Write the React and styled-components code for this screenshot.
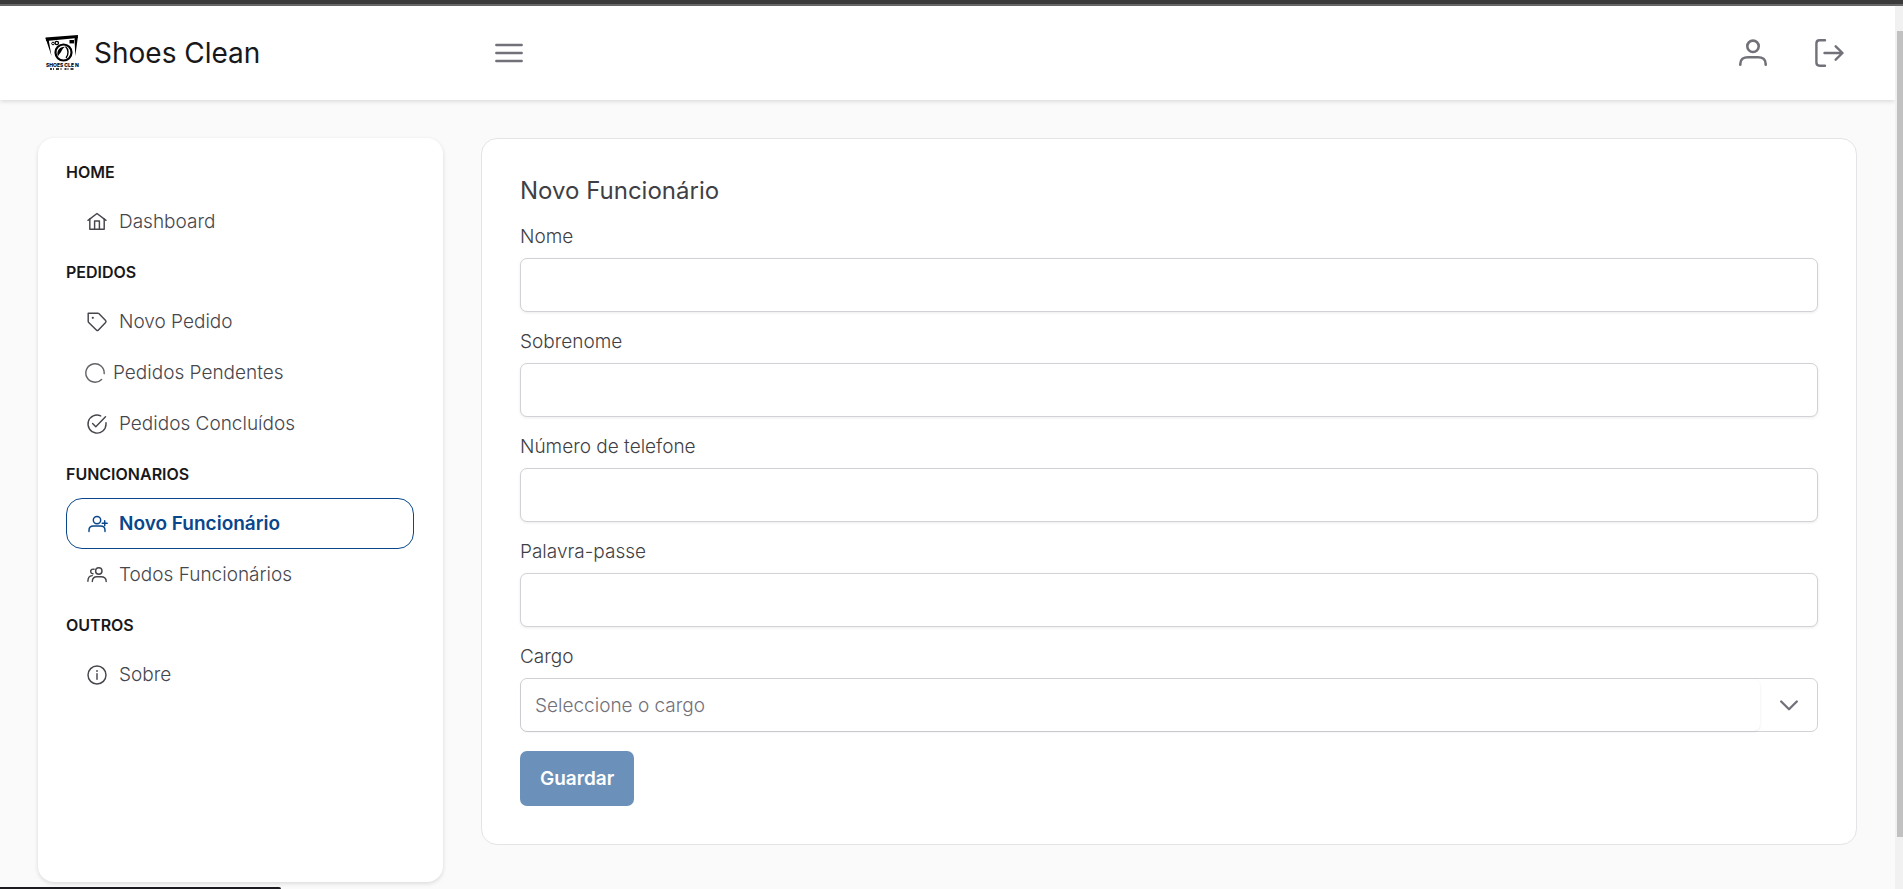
import React, { useRef } from "react";
import styled, { createGlobalStyle, css } from "styled-components";

const GlobalStyle = createGlobalStyle`
  *, *::before, *::after { box-sizing: border-box; }
  body {
    margin: 0;
    background: #fafafa;
    color: #3f3f46;
    font-family: Inter, "Liberation Sans", sans-serif;
    font-size: 19px;
    font-weight: 300;
  }
  button, input, select { font: inherit; color: inherit; }
`;

const Window = styled.div`
  display: flex;
  flex-direction: column;
  min-height: 100vh;
`;

const WindowEdge = styled.div`
  height: 6px;
  background: #3a3a3a;
  border-bottom: 2px solid #696969;
`;

const Viewport = styled.div`
  flex: 1;
  display: grid;
  grid-template-columns: minmax(0, 1fr) 8px;
`;

const Page = styled.div`
  display: flex;
  flex-direction: column;
`;

const ScrollTrack = styled.div`
  display: flex;
  flex-direction: column;
  background: #f1f1f1;
  padding: 25px 0 52px 2px;
`;

const ScrollThumb = styled.div`
  flex: 1;
  background: #c1c1c1;
`;

const TopBar = styled.header`
  display: flex;
  align-items: center;
  height: 94px;
  padding: 0 38px 0 45px;
  background: #fff;
  box-shadow: 0 2px 5px rgba(0, 0, 0, 0.08), 0 1px 4px rgba(0, 0, 0, 0.06);
`;

const Brand = styled.a`
  display: flex;
  align-items: center;
  gap: 15px;
  flex: 0 0 432px;
  color: #18181b;
  font-size: 28px;
  font-weight: 400;
  text-decoration: none;
`;

const IconButton = styled.button`
  display: flex;
  align-items: center;
  justify-content: center;
  width: ${(p) => (p.$wide ? 64 : 56)}px;
  height: 56px;
  padding: 0;
  border: 0;
  background: none;
  color: #71717a;
`;

const TopActions = styled.div`
  display: flex;
  gap: 20px;
  margin-left: auto;
`;

const Body = styled.div`
  flex: 1;
  display: grid;
  grid-template-columns: 405px minmax(0, 1fr);
  gap: 38px;
  padding: 38px 38px 7px;
`;

const Sidebar = styled.nav`
  padding: 9px 29px 9px 28px;
  border-radius: 16px;
  background: #fff;
  box-shadow: 0 2px 5px rgba(0, 0, 0, 0.08), 0 1px 4px rgba(0, 0, 0, 0.06);
`;

const GroupTitle = styled.h2`
  margin: 0;
  padding: 15px 0 14px;
  color: #18181b;
  font-size: 16px;
  font-weight: 600;
  line-height: 20px;
`;

const Menu = styled.ul`
  margin: 0;
  padding: 0;
  list-style: none;
`;

const MenuLink = styled.a`
  display: flex;
  align-items: center;
  gap: ${(p) => (p.$tight ? 8 : 12)}px;
  height: 51px;
  padding-left: ${(p) => (p.$tight ? 18 : 20)}px;
  border: 1px solid transparent;
  border-radius: 16px;
  color: #46464d;
  text-decoration: none;
  ${(p) =>
    p.$active &&
    css`
      border-color: #09468b;
      color: #09468b;
      font-weight: 600;
    `}
`;

const Card = styled.main`
  align-self: start;
  padding: 38px;
  border: 1px solid #e4e4e7;
  border-radius: 16px;
  background: #fff;
`;

const CardTitle = styled.h1`
  margin: 0 0 18px;
  font-size: 24px;
  font-weight: 400;
  line-height: 28px;
`;

const Form = styled.form`
  display: flex;
  flex-direction: column;
  align-items: stretch;
  gap: 16px;
`;

const Field = styled.div`
  display: flex;
  flex-direction: column;
  gap: 7px;
`;

const Label = styled.label`
  line-height: 28px;
`;

const TextInput = styled.input`
  width: 100%;
  height: 54px;
  padding: 0 14px;
  border: 1px solid #d1d1d6;
  border-radius: 7px;
  background: #fff;
  box-shadow: 0 1px 3px rgba(18, 18, 23, 0.08);
`;

const SelectFrame = styled.div`
  display: flex;
  height: 54px;
  border: 1px solid #d1d1d6;
  border-radius: 7px;
  background: #fff;
`;

const Select = styled.select`
  flex: 1;
  min-width: 0;
  padding: 0 14px;
  border: 0;
  border-radius: 7px;
  background: #fff;
  box-shadow: 0 1px 3px rgba(18, 18, 23, 0.08);
  color: #71717a;
  appearance: none;
`;

const SelectToggle = styled.button`
  display: flex;
  align-items: center;
  justify-content: center;
  width: 57px;
  padding: 0;
  border: 0;
  background: none;
  color: #71717a;
`;

const SaveButton = styled.button`
  align-self: flex-start;
  height: 55px;
  margin-top: 3px;
  padding: 0 20px;
  border: 0;
  border-radius: 7px;
  background: #6b90b9;
  color: #fff;
  font-weight: 600;
`;

const StatusBubble = styled.div`
  position: fixed;
  left: 0;
  bottom: 0;
  width: 281px;
  height: 2px;
  border-top-right-radius: 4px;
  background: #1c1b1f;
`;

const shapes = {
  home: (
    <>
      <path d="M1 8.3 10 1.5l9 6.8" />
      <path d="M2.8 7v10.2h14.4V7" />
      <path d="M7.6 17V8.9h4.8V17" />
    </>
  ),
  tag: (
    <>
      <path d="M1.2 1.2h9.6q.6 0 1 .4l6.8 7q.8.9 0 1.8l-7.4 7.8q-.8.8-1.6 0L1.7 10.4q-.5-.5-.5-1.2z" />
      <circle cx="5.8" cy="5.8" r="1.1" fill="currentColor" stroke="none" />
    </>
  ),
  spinner: <path d="M16.6 16.4A9.2 9.2 0 1 1 19.2 10.6" opacity=".85" />,
  check: (
    <>
      <path d="M19 8.8v1.4A9 9 0 1 1 13.7 1.9" />
      <path d="m5.6 9.4 3.2 3.3L18.5 2.8" />
    </>
  ),
  userPlus: (
    <>
      <circle cx="10" cy="6.1" r="3.7" />
      <path d="M2 17.6v-1.4c0-2.7 1.9-4.2 4.5-4.2h7c2.6 0 4.5 1.5 4.5 4.2v1.4" />
      <path d="M17.7 6.8v5M15.2 9.3h5" />
    </>
  ),
  users: (
    <>
      <circle cx="11.8" cy="6" r="3.2" />
      <path d="M5.3 16.5c0-3.3 2-4.8 4.3-4.8H14c2.9 0 5.2 1.5 5.2 4.8" />
      <path d="M7 4.3C5 3.7 3.4 4.9 3.7 6.8c.2 1.2 1.1 1.9 2.3 2M.9 16.3c0-3.6 1.3-5.500 4.3-5.7" />
    </>
  ),
  info: (
    <>
      <circle cx="10" cy="10" r="9" />
      <path d="M10 8.7v5.6" />
      <circle cx="10" cy="6" r=".9" fill="currentColor" stroke="none" />
    </>
  ),
};

function MenuIcon({ name }) {
  return (
    <svg
      width="20"
      height="20"
      viewBox="0 0 20 20"
      fill="none"
      stroke="currentColor"
      strokeWidth="1.45"
      strokeLinecap="round"
      strokeLinejoin="round"
      overflow="visible"
      aria-hidden="true"
    >
      {shapes[name]}
    </svg>
  );
}

function Logo() {
  return (
    <svg width="34" height="38" viewBox="0 0 34 38" aria-hidden="true">
      <path d="M.5 3.5 33 1 32.600 4 1.200 7z" />
      <path d="M.5 4 3.500 5l3 17zM33 2l-3.500 2.500.8 17.500z" />
      <rect x="24.500" y="6" width="4.500" height="3.400" />
      <circle cx="8" cy="9.500" r="1.300" fill="none" stroke="#000" />
      <circle cx="11.800" cy="9" r="1.700" fill="none" stroke="#000" strokeWidth="1.300" />
      <circle cx="18.500" cy="18.500" r="8" fill="#fff" stroke="#000" strokeWidth="2.200" />
      <path d="M13 22.500c-2-5 1-9.800 7-9.800-3 2-3 4-4.500 6-1 1.400-2 2-2.500 3.800z" />
      <path d="M20.500 12.500c3 2.500 3.500 8 .5 11.500" fill="none" stroke="#000" strokeWidth="1.400" />
      <text x="1" y="32.500" fontSize="5" fontWeight="800" fontFamily="Inter, sans-serif">
        SHOES CLE N
      </text>
      <path d="M5 35h24" stroke="#000" strokeWidth="1.300" strokeDasharray="2 1 1 2 3 1.500 1 3" />
    </svg>
  );
}

const groups = [
  { title: "HOME", items: [{ label: "Dashboard", icon: "home" }] },
  {
    title: "PEDIDOS",
    items: [
      { label: "Novo Pedido", icon: "tag" },
      { label: "Pedidos Pendentes", icon: "spinner", tight: true },
      { label: "Pedidos Concluídos", icon: "check" },
    ],
  },
  {
    title: "FUNCIONARIOS",
    items: [
      { label: "Novo Funcionário", icon: "userPlus", active: true },
      { label: "Todos Funcionários", icon: "users" },
    ],
  },
  { title: "OUTROS", items: [{ label: "Sobre", icon: "info" }] },
];

const fields = [
  { id: "nome", label: "Nome", type: "text" },
  { id: "sobrenome", label: "Sobrenome", type: "text" },
  { id: "telefone", label: "Número de telefone", type: "tel" },
  { id: "senha", label: "Palavra-passe", type: "password" },
];

export default function App() {
  const cargo = useRef(null);
  return (
    <Window>
      <GlobalStyle />
      <WindowEdge />
      <Viewport>
        <Page>
          <TopBar>
            <Brand href="#">
              <Logo />
              <span>Shoes Clean</span>
            </Brand>
            <IconButton $wide type="button" aria-label="Menu">
              <svg width="28" height="22" viewBox="0 0 28 22" stroke="currentColor" strokeWidth="2.6" strokeLinecap="round">
                <path d="M1.400 3h25.200M1.400 11h25.200M1.400 19h25.200" />
              </svg>
            </IconButton>
            <TopActions>
              <IconButton type="button" aria-label="Perfil">
                <svg width="28" height="28" viewBox="0 0 28 28" fill="none" stroke="currentColor" strokeWidth="2.600" strokeLinecap="round">
                  <circle cx="14" cy="7.300" r="5.700" />
                  <path d="M1.300 25.800v-.9c0-4.600 3.400-6.700 7.600-6.700h10.200c4.200 0 7.600 2.100 7.600 6.700v.9" />
                </svg>
              </IconButton>
              <IconButton type="button" aria-label="Sair">
                <svg width="29" height="28" viewBox="0 0 29 28" fill="none" stroke="currentColor" strokeWidth="2.400" strokeLinecap="round" strokeLinejoin="round">
                  <path d="M10 1.300H4.600q-3.200 0-3.200 3.200v19q0 3.200 3.200 3.200H10" />
                  <path d="M9.500 14H27M20.700 7.300 27.500 14l-6.800 6.700" />
                </svg>
              </IconButton>
            </TopActions>
          </TopBar>
          <Body>
            <Sidebar>
              {groups.map((group) => (
                <section key={group.title}>
                  <GroupTitle>{group.title}</GroupTitle>
                  <Menu>
                    {group.items.map((item) => (
                      <li key={item.label}>
                        <MenuLink href="#" $active={item.active} $tight={item.tight}>
                          <MenuIcon name={item.icon} />
                          {item.label}
                        </MenuLink>
                      </li>
                    ))}
                  </Menu>
                </section>
              ))}
            </Sidebar>
            <Card>
              <CardTitle>Novo Funcionário</CardTitle>
              <Form onSubmit={(e) => e.preventDefault()}>
                {fields.map((field) => (
                  <Field key={field.id}>
                    <Label htmlFor={field.id}>{field.label}</Label>
                    <TextInput id={field.id} type={field.type} />
                  </Field>
                ))}
                <Field>
                  <Label htmlFor="cargo">Cargo</Label>
                  <SelectFrame>
                    <Select id="cargo" ref={cargo} defaultValue="">
                      <option value="">Seleccione o cargo</option>
                    </Select>
                    <SelectToggle type="button" aria-label="Abrir lista" onClick={() => cargo.current.showPicker()}>
                      <svg width="18" height="11" viewBox="0 0 18 11" fill="none" stroke="currentColor" strokeWidth="2.300" strokeLinecap="round" strokeLinejoin="round">
                        <path d="m1.200 1.500 7.800 7.800 7.800-7.800" />
                      </svg>
                    </SelectToggle>
                  </SelectFrame>
                </Field>
                <SaveButton type="submit">Guardar</SaveButton>
              </Form>
            </Card>
          </Body>
        </Page>
        <ScrollTrack>
          <ScrollThumb />
        </ScrollTrack>
      </Viewport>
      <StatusBubble />
    </Window>
  );
}
